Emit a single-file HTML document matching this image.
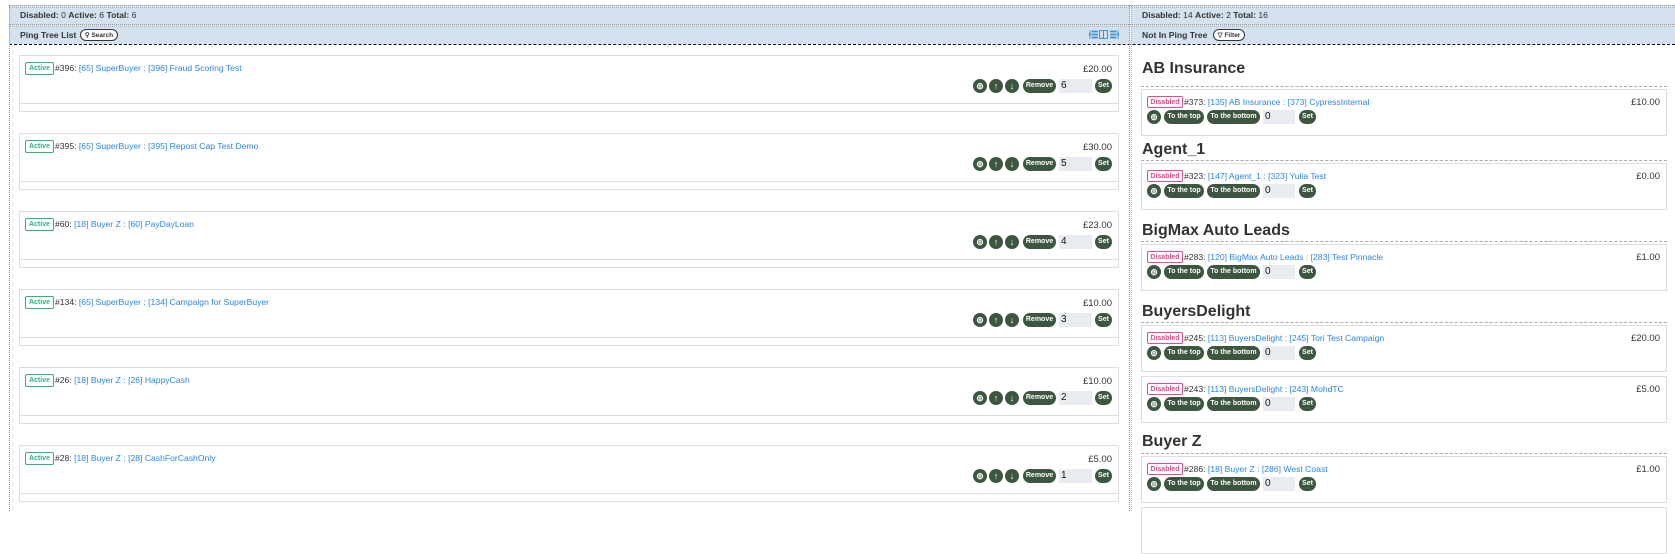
<!DOCTYPE html>
<html><head><meta charset="utf-8"><style>
*{box-sizing:border-box;margin:0;padding:0}
body{width:1675px;height:511px;background:#fff;font-family:"Liberation Sans",Arial,sans-serif;font-size:8.6px;color:#333;position:relative;overflow:hidden}
.a{position:absolute;white-space:nowrap}
.hdr{background:#d4e2ef}
.dot{border-top:1px dotted #999}
.b{font-weight:bold}
.card{position:absolute;border:1px solid #ddd;background:#fff}
.badge{position:absolute;border:1px solid #2fb37f;color:#2fb37f;border-radius:2px;font-size:7px;font-weight:bold;text-align:center;line-height:11px}
.dis{border-color:#e64c8c;color:#e64c8c}
.lnk{color:#2a86e8}
.btn{position:absolute;background:#3d5640;color:#fff;border-radius:8px;font-size:7px;font-weight:bold;text-align:center;line-height:14px;height:14px;white-space:nowrap;overflow:hidden}
.c{width:14px;border-radius:50%;font-size:9px}
.inp{position:absolute;background:#e8ecf1;height:14px;font-size:10px;color:#111;line-height:14px;padding-left:2px}
.pr{position:absolute;font-size:9.5px;color:#333;text-align:right}
h2{position:absolute;font-size:16px;font-weight:bold;color:#333;white-space:nowrap}
.dash{position:absolute;border-top:1px dashed #aaa;height:0}
.pill{position:absolute;border:1px solid #333;border-radius:8px;font-size:6.5px;font-weight:bold;line-height:11px;text-align:center;background:#fff}
</style></head><body>
<div class="a hdr" style="left:9px;top:5px;width:1121px;height:39px"></div>
<div class="a hdr" style="left:1131px;top:5px;width:544px;height:39px"></div>
<div class="a dot" style="left:9px;top:5px;width:1666px"></div>
<div class="a dot" style="left:9px;top:7px;width:1666px;opacity:.6"></div>
<div class="a dot" style="left:9px;top:24px;width:1666px"></div>
<div class="a dot" style="left:9px;top:26px;width:1666px;opacity:.6"></div>
<div class="a" style="left:9px;top:44px;width:1666px;border-top:1px dashed #000"></div>
<div class="a" style="left:9px;top:5px;height:506px;border-left:1px dotted #999"></div>
<div class="a" style="left:1129px;top:5px;height:506px;border-left:1px dotted #999"></div>
<div class="a" style="left:1131px;top:5px;height:506px;border-left:1px dotted #bbb"></div>

<div class="a" style="left:20px;top:10px"><span class="b">Disabled:</span> 0 <span class="b">Active:</span> 6 <span class="b">Total:</span> 6</div>
<div class="a b" style="left:20px;top:30px">Ping Tree List</div>
<div class="pill" style="left:80px;top:29px;width:38px;height:12px">&#9906; Search</div>
<svg class="a" style="left:1089px;top:30px" width="30" height="9" viewBox="0 0 30 9"><g fill="#3b8fd9"><rect x="0" y="0" width="9" height="9" opacity=".35"/><rect x="3" y="1" width="6" height="1"/><rect x="3" y="4" width="6" height="1"/><rect x="3" y="7" width="6" height="1"/><path d="M0 2l2 2.5-2 2.5z"/><rect x="10.5" y=".5" width="8" height="8" fill="none" stroke="#3b8fd9"/><rect x="14" y="0" width="1" height="9"/><rect x="21" y="0" width="9" height="9" opacity=".35"/><rect x="21" y="1" width="6" height="1"/><rect x="21" y="4" width="6" height="1"/><rect x="21" y="7" width="6" height="1"/><path d="M30 2l-2 2.5 2 2.5z"/></g></svg>

<div class="a" style="left:1142px;top:10px"><span class="b">Disabled:</span> 14 <span class="b">Active:</span> 2 <span class="b">Total:</span> 16</div>
<div class="a b" style="left:1142px;top:30px">Not In Ping Tree</div>
<div class="pill" style="left:1213px;top:29px;width:32px;height:12px">&#9661; Filter</div>

<div id="L"></div>
<div id="R"></div>
<script>
var L=[["#396:","[65] SuperBuyer : [396] Fraud Scoring Test","£20.00",6],["#395:","[65] SuperBuyer : [395] Repost Cap Test Demo","£30.00",5],["#60:","[18] Buyer Z : [60] PayDayLoan","£23.00",4],["#134:","[65] SuperBuyer : [134] Campaign for SuperBuyer","£10.00",3],["#26:","[18] Buyer Z : [26] HappyCash","£10.00",2],["#28:","[18] Buyer Z : [28] CashForCashOnly","£5.00",1]];
var h="";
L.forEach(function(c,i){var t=55+i*78;
h+='<div class="card" style="left:19px;top:'+t+'px;width:1100px;height:57px"><div class="a" style="left:0;top:47px;width:1098px;border-top:1px solid #ddd"></div></div>';
h+='<div class="badge" style="left:25px;top:'+(t+7)+'px;width:29px;height:13px">Active</div>';
h+='<div class="a" style="left:55px;top:'+(t+8)+'px">'+c[0]+' <span class="lnk">'+c[1]+'</span></div>';
h+='<div class="pr" style="left:1040px;width:72px;top:'+(t+9)+'px">'+c[2]+'</div>';
var y=t+24;
h+='<div class="btn c" style="left:973px;top:'+y+'px">⊚</div><div class="btn c" style="left:989px;top:'+y+'px">↑</div><div class="btn c" style="left:1005px;top:'+y+'px">↓</div>';
h+='<div class="btn" style="left:1023px;top:'+y+'px;width:33px">Remove</div><div class="inp" style="left:1059px;top:'+y+'px;width:33px">'+c[3]+'</div><div class="btn" style="left:1095px;top:'+y+'px;width:17px">Set</div>';
});
document.getElementById("L").innerHTML=h;
var R=[["AB Insurance",60,86,"#373:","[135] AB Insurance : [373] CypressInternal","£10.00"],["Agent_1",141,160,"#323:","[147] Agent_1 : [323] Yulia Test","£0.00"],["BigMax Auto Leads",222,241,"#283:","[120] BigMax Auto Leads : [283] Test Pinnacle","£1.00"],["BuyersDelight",303,322,"#245:","[113] BuyersDelight : [245] Tori Test Campaign","£20.00"],[null,0,0,"#243:","[113] BuyersDelight : [243] MohdTC","£5.00"],["Buyer Z",433,453,"#286:","[18] Buyer Z : [286] West Coast","£1.00"],[null,0,0,"","",""]];
h="";var t=0;
R.forEach(function(c){
if(c[0]){h+='<h2 style="left:1142px;top:'+c[1]+'px">'+c[0]+'</h2><div class="dash" style="left:1141px;width:526px;top:'+c[2]+'px"></div>';t=c[2]+3;}else{t+=4;}
h+='<div class="card" style="left:1141px;top:'+t+'px;width:526px;height:47px"></div>';
if(c[3]){
h+='<div class="badge dis" style="left:1147px;top:'+(t+7)+'px;width:36px;height:12px">Disabled</div>';
h+='<div class="a" style="left:1184px;top:'+(t+8)+'px">'+c[3]+' <span class="lnk">'+c[4]+'</span></div>';
h+='<div class="pr" style="left:1590px;width:70px;top:'+(t+8)+'px">'+c[5]+'</div>';
var y=t+21;
h+='<div class="btn c" style="left:1147px;top:'+y+'px">⊚</div><div class="btn" style="left:1164px;top:'+y+'px;width:40px">To the top</div><div class="btn" style="left:1207px;top:'+y+'px;width:53px">To the bottom</div><div class="inp" style="left:1263px;top:'+y+'px;width:32px">0</div><div class="btn" style="left:1299px;top:'+y+'px;width:17px">Set</div>';}
t+=47;
});
document.getElementById("R").innerHTML=h;
</script>
</body></html>
